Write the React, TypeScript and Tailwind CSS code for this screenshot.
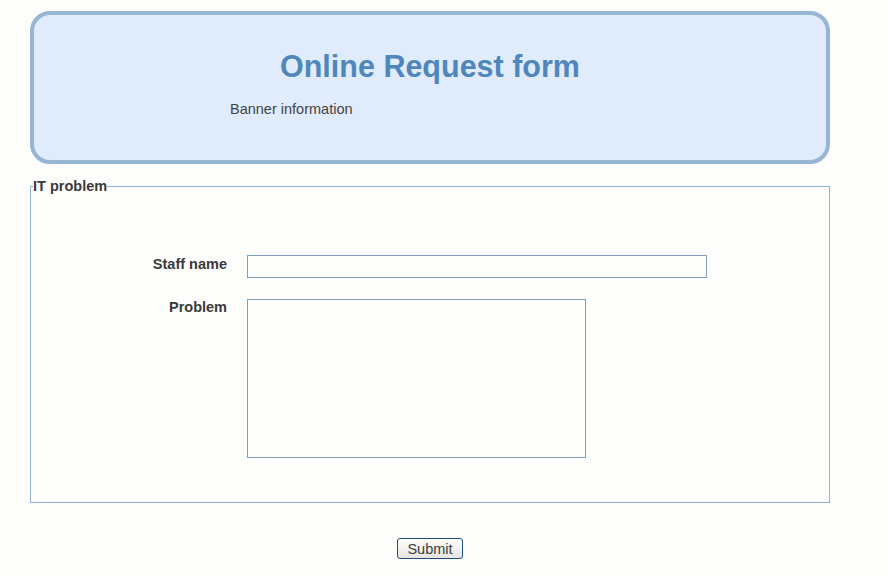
export default function App() {
  return (
    <div className="min-h-[576px] w-[888px] bg-[#fdfdfc] pt-[11px] font-['Liberation_Sans',Arial,sans-serif] text-[14.5px] text-[#3a3a3a]">
      <div className="ml-[30px] w-[800px]">
        {/* Banner */}
        <div className="rounded-[20px] border-4 border-[#97b6d4] bg-[#e0ecfb] pb-[42px] pt-[34px]">
          <h1 className="text-center text-[30.5px] font-bold leading-[1.15] text-[#4f87bd]">
            Online Request form
          </h1>
          <p className="mt-[17px] pl-[196px] leading-[1.15] text-[#444]">Banner information</p>
        </div>

        {/* Form */}
        <form className="mt-[14px]">
          <fieldset className="border border-[#92b3d3] pb-[44px]">
            <legend className="ml-[2px] font-bold leading-[1.15] text-[#3a3a3a]">IT problem</legend>
            <div className="mt-[61px] grid grid-cols-[196px_1fr] gap-x-[20px] gap-y-[21px]">
              <label className="mt-px text-right font-bold leading-[1.15]">Staff name</label>
              <input
                type="text"
                className="h-[23px] w-[460px] border border-[#7f9db9] bg-[#fdfdfc] px-1 outline-none"
              />
              <label className="text-right font-bold leading-[1.15]">Problem</label>
              <textarea className="h-[159px] w-[339px] resize-none border border-[#7f9db9] bg-[#fdfdfc] outline-none" />
            </div>
          </fieldset>

          <div className="mt-[35px] flex justify-center">
            <button
              type="button"
              className="h-[21px] w-[66px] rounded-[3px] border border-[#1f4f7e] bg-gradient-to-b from-[#fdfdfd] to-[#e6e5e0] text-[14.5px] leading-none text-[#3c3c3c]"
            >
              Submit
            </button>
          </div>
        </form>
      </div>
    </div>
  );
}
